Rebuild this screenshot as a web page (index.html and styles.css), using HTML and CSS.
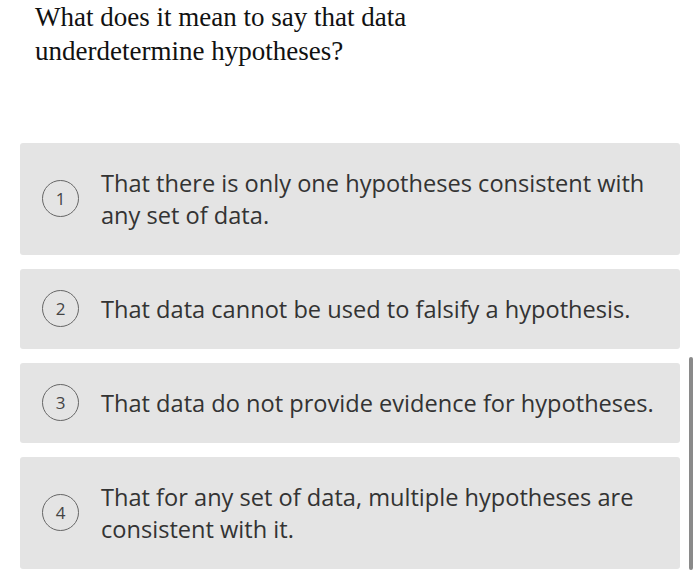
FILE: index.html
```html
<!DOCTYPE html>
<html>
<head>
<meta charset="utf-8">
<link rel="stylesheet" href="styles.css">
</head>
<body>
<div class="page">
  <h1 class="question">What does it mean to say that data<br>underdetermine hypotheses?</h1>
  <div class="options">
    <div class="option"><span class="num">1</span><span class="text">That there is only one hypotheses consistent with any set of data.</span></div>
    <div class="option"><span class="num">2</span><span class="text">That data cannot be used to falsify a hypothesis.</span></div>
    <div class="option"><span class="num">3</span><span class="text">That data do not provide evidence for hypotheses.</span></div>
    <div class="option"><span class="num">4</span><span class="text">That for any set of data, multiple hypotheses are consistent with it.</span></div>
  </div>
  <div class="scrollbar"></div>
</div>
</body>
</html>
```

FILE: styles.css
```css
html, body {
  margin: 0;
  padding: 0;
  background: #ffffff;
}
.page {
  position: relative;
  width: 700px;
  height: 579px;
  overflow: hidden;
}
.question {
  margin: 0;
  padding: 0 0 0 35px;
  font-family: "Liberation Serif", "Times New Roman", serif;
  font-weight: normal;
  font-size: 27px;
  line-height: 34px;
  color: #111;
}
.options {
  margin: 75px 0 0 20px;
  width: 660px;
  display: flex;
  flex-direction: column;
  gap: 14px;
}
.option {
  display: flex;
  align-items: center;
  gap: 22px;
  background: #e4e4e4;
  border-radius: 3px;
  padding: 24px 18px 24px 22px;
  font-family: "Open Sans", "Noto Sans", sans-serif;
  font-size: 23.6px;
  line-height: 32px;
  color: #333;
}
.num {
  box-sizing: border-box;
  flex: 0 0 auto;
  width: 37px;
  height: 37px;
  margin: -3px 0 -2px;
  border: 1.5px solid #666;
  border-radius: 50%;
  display: flex;
  align-items: center;
  justify-content: center;
  font-size: 17px;
  line-height: 1;
  color: #444;
}
.text {
  flex: 1 1 auto;
}
.scrollbar {
  position: absolute;
  left: 689px;
  top: 357px;
  width: 4px;
  height: 213px;
  background: #8a8a8a;
  border-radius: 2px;
}
```
